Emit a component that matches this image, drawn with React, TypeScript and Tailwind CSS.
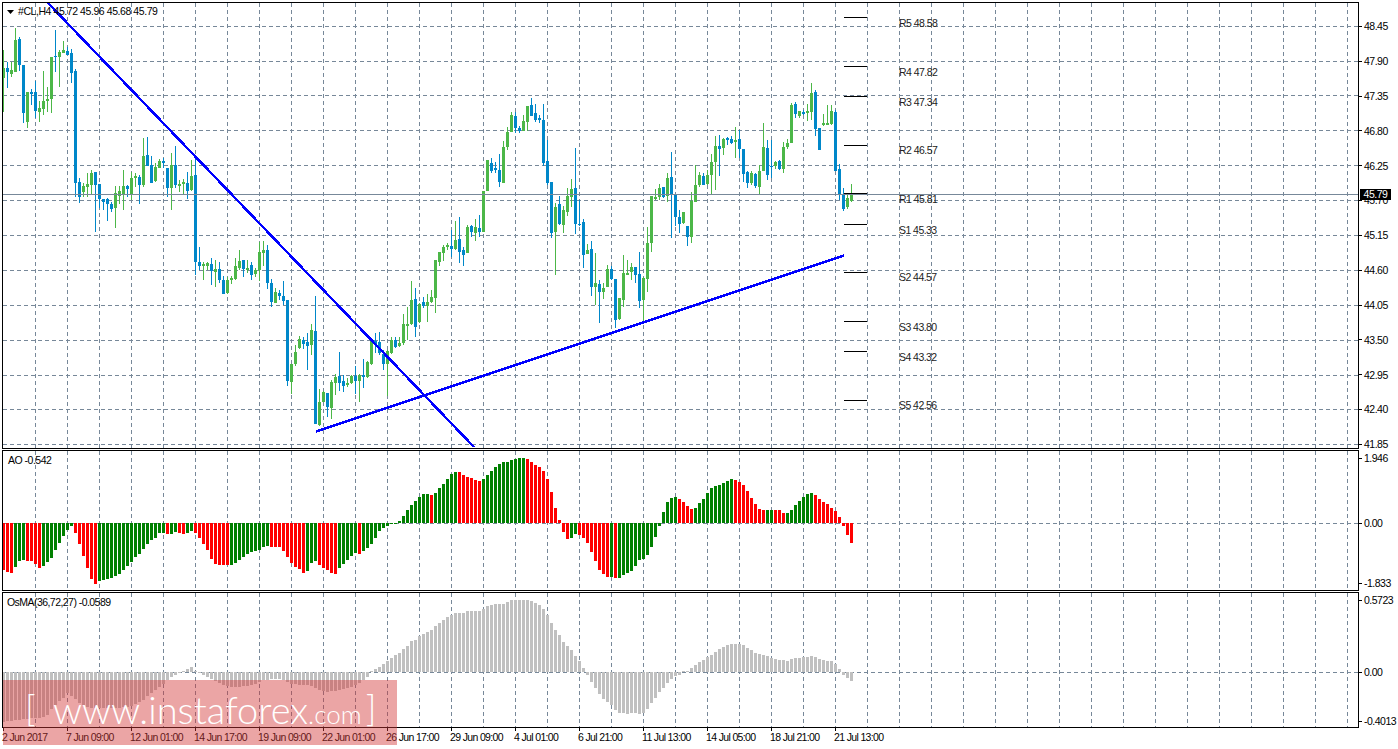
import React from 'react';

// one row per H4 bar, 4px apart starting at x=3: high, body top, body bottom, low (y px), 1 = bull
const candles: number[][] = [
  [50,68,78,112,1],[62,68,72,88,0],[62,70,74,77,1],[28,40,72,72,1],[37,39,65,71,0],[65,65,113,123,0],[92,92,122,128,1],[89,92,94,105,0],
  [81,92,111,118,0],[101,108,112,122,1],[71,101,109,115,1],[87,99,101,112,1],[57,57,99,113,1],[30,56,57,72,0],[50,52,57,87,1],[41,50,53,53,1],
  [47,51,55,55,0],[49,53,73,83,0],[69,71,183,197,0],[178,182,197,203,0],[183,186,192,197,1],[173,184,187,197,1],[170,173,185,195,1],[172,172,185,232,0],
  [184,184,199,208,0],[199,199,202,210,0],[198,199,204,221,0],[202,204,209,212,0],[186,193,208,228,1],[186,191,196,204,1],[170,186,194,210,1],[185,186,189,197,0],
  [172,178,195,200,1],[173,176,178,187,1],[175,177,185,204,0],[138,156,185,187,1],[137,155,166,166,0],[156,165,183,183,0],[163,167,181,182,1],[159,161,168,168,1],
  [158,161,163,168,0],[168,168,188,197,0],[153,165,188,210,1],[146,165,185,188,0],[180,184,186,192,1],[179,182,184,195,1],[172,183,191,199,0],[160,176,190,191,1],
  [155,175,262,275,0],[247,262,266,270,0],[262,264,266,280,1],[262,263,266,270,1],[258,264,271,285,0],[260,269,272,287,1],[262,269,280,283,0],[276,280,294,294,0],
  [277,280,293,294,1],[276,278,280,284,1],[258,266,279,280,1],[250,261,268,270,1],[260,260,269,277,0],[260,268,270,273,1],[262,265,275,280,0],[268,270,274,277,1],
  [242,252,270,281,1],[241,250,253,266,1],[245,250,283,289,0],[279,283,302,307,0],[288,292,303,303,1],[290,293,296,300,0],[281,296,301,305,0],[300,300,381,386,0],
  [364,364,382,394,1],[345,352,364,366,1],[336,339,348,349,1],[337,340,344,349,0],[333,342,346,370,0],[324,330,345,355,1],[296,331,424,424,0],[389,402,425,426,1],
  [391,392,402,402,1],[393,393,407,417,0],[380,382,408,419,1],[374,377,383,395,1],[352,376,383,391,0],[375,381,386,392,0],[378,383,385,387,1],[375,376,383,384,1],
  [366,376,381,394,0],[374,375,381,402,1],[359,375,377,388,0],[361,362,377,378,1],[340,341,364,365,1],[333,341,345,353,0],[332,342,353,355,0],[350,354,364,370,0],
  [350,351,364,396,1],[337,340,353,354,1],[337,340,347,348,0],[337,343,346,347,1],[314,324,343,345,1],[307,324,326,340,1],[281,300,324,325,1],[288,299,327,337,0],
  [303,304,322,323,1],[297,302,306,308,0],[294,302,306,322,1],[290,297,302,303,1],[260,260,298,313,1],[252,252,262,266,1],[245,247,253,261,1],[243,245,247,250,1],
  [230,246,249,257,0],[221,240,249,250,1],[217,239,252,263,0],[247,250,255,266,0],[225,227,253,253,1],[225,226,232,237,0],[219,227,233,241,1],[215,228,232,237,0],
  [191,191,232,232,1],[160,160,191,191,1],[158,163,171,173,0],[162,168,170,173,0],[154,170,182,187,0],[141,147,183,183,1],[127,132,147,150,1],[112,115,132,132,1],
  [112,116,128,133,0],[126,128,131,133,0],[115,121,131,131,1],[106,106,122,131,1],[98,105,116,116,0],[104,113,120,122,0],[115,118,120,123,0],[104,120,163,166,0],
  [140,161,183,185,0],[182,182,233,238,0],[203,207,232,275,1],[196,204,224,225,0],[206,210,225,233,1],[188,196,212,216,1],[179,189,197,207,1],[148,188,224,234,0],
  [200,224,225,226,0],[219,222,255,268,0],[244,250,254,254,1],[241,249,287,296,0],[253,283,287,305,1],[280,284,292,323,0],[283,288,292,299,1],[265,269,287,287,1],
  [266,269,279,280,0],[279,279,320,328,0],[298,298,319,320,1],[255,273,300,307,1],[260,273,275,275,1],[263,267,272,280,1],[267,267,275,283,0],[252,274,301,308,0],
  [277,278,300,322,1],[227,243,279,292,1],[196,196,243,252,1],[189,197,199,200,1],[184,188,197,200,1],[187,187,197,198,0],[173,178,196,202,1],[152,177,195,238,0],
  [194,195,217,226,0],[210,217,224,233,0],[212,212,223,224,1],[226,226,237,246,0],[192,201,237,243,1],[165,185,202,202,1],[172,175,185,187,1],[173,176,185,185,0],
  [170,175,184,185,1],[154,162,175,194,1],[136,146,162,190,1],[135,146,149,176,0],[138,139,148,155,1],[137,138,140,145,0],[136,139,143,144,0],[127,140,142,158,1],
  [130,139,149,158,0],[149,149,174,182,0],[171,172,183,188,0],[171,173,183,185,1],[173,174,186,188,0],[165,171,187,194,1],[123,147,171,171,1],[140,148,175,180,0],
  [140,166,167,178,0],[161,162,166,169,1],[160,161,169,170,0],[142,147,169,173,1],[139,143,147,149,1],[103,105,143,143,1],[102,104,114,118,0],[111,111,116,118,1],
  [110,112,114,115,0],[104,111,113,121,1],[83,93,112,120,1],[90,92,129,136,0],[128,128,150,150,0],[114,123,125,126,1],[105,123,125,125,1],[105,111,124,125,1],
  [110,112,171,171,0],[164,169,195,200,0],[188,195,209,211,0],[195,198,207,209,1],[184,194,201,202,1],
];

// AO histogram: runs of one colour, px from the zero line (plus = below)
const aoRuns: [string, number[]][] = [
  ['#ff0000',[47,49,50]],['#008000',[44,38,37]],['#ff0000',[38,38,41,45]],['#008000',[43,39,35,27,20,13,7,3]],
  ['#ff0000',[10,21,33,45,56,61]],['#008000',[58,57,56,55,53,51,47,43,39,34,31,26,21,17,15,10,10]],['#ff0000',[11]],['#008000',[11,9]],
  ['#ff0000',[10,11]],['#008000',[10,8]],['#ff0000',[10,15,21,27,36,41,42,42,42]],['#008000',[42,40,37,34,31,29,28,27,24,23]],
  ['#ff0000',[24,24,24,28,34,40,44,46,50]],['#008000',[48,40,38]],['#ff0000',[42,45,47,50,51]],['#008000',[45,41,37,33,30]],['#ff0000',[31]],
  ['#008000',[28,25,21,15,8,5,3,1,1,-2,-7,-13,-18,-22,-26,-29,-29]],['#ff0000',[-28]],['#008000',[-30,-35,-39,-44,-49,-51]],
  ['#ff0000',[-51,-48,-46,-45,-43,-42]],['#008000',[-44,-48,-52,-56,-59,-61,-61,-63,-64,-65,-65]],['#ff0000',[-64,-61,-58,-56,-52,-44,-31,-15,-3,9,16]],
  ['#008000',[15,11]],['#ff0000',[12,15,20,29,38,47,51,54]],['#008000',[54]],['#ff0000',[55]],
  ['#008000',[55,52,50,48,43,37,36,32,24,14,3,-11,-21,-25,-26]],['#ff0000',[-24,-21,-17,-14]],['#008000',[-15,-20,-24,-30,-35,-37,-38,-40,-42,-44]],
  ['#ff0000',[-43,-41,-38,-32,-25,-19,-14,-13]],['#008000',[-13,-13]],['#ff0000',[-13,-13,-10]],['#008000',[-10,-13,-18,-22,-26,-29,-30]],
  ['#ff0000',[-28,-24,-21,-19,-15,-12,-6,3,12,20]],
];
const ao = aoRuns.flatMap(([color, vals]) => vals.map((v) => ({ color, v })));

// OsMA histogram, px above the zero line
const osma = [
  -50,-49,-49,-48,-48,-47,-47,-46,-46,-46,-45,-43,-37,-33,-29,-26,-21,-24,-27,-31,-33,-35,-36,-36,-36,-36,-36,-36,-36,-36,-35,-35,
  -34,-32,-30,-28,-24,-21,-18,-15,-12,-8,-5,-3,-1,1,3,5,1,-1,-3,-5,-7,-9,-11,-13,-14,-15,-15,-15,-14,-14,-13,-12,-10,-8,-8,-7,-7,-7,
  -8,-10,-12,-12,-13,-13,-13,-14,-16,-18,-19,-20,-19,-19,-18,-17,-16,-15,-13,-11,-8,-5,1,3,5,8,11,14,17,19,23,26,31,32,36,38,40,42,46,49,
  52,55,57,59,59,59,61,61,61,61,63,66,67,68,68,68,70,72,72,72,72,72,71,69,67,63,57,49,42,37,30,26,22,16,11,4,-3,-10,-16,-22,-27,-30,-33,
  -38,-41,-41,-42,-41,-41,-42,-41,-37,-31,-26,-20,-16,-11,-7,-4,-3,1,1,4,7,10,12,15,17,20,23,25,27,28,28,28,27,24,22,19,18,17,16,14,13,
  12,12,11,13,14,14,15,15,16,15,13,12,11,11,8,3,-3,-6,-9,
];

const gridXs = Array.from({ length: 42 }, (_, i) => 35 + 32 * i);
const priceYs = [26, 61, 95, 130, 165, 200, 235, 270, 305, 340, 375, 409, 444];
const priceLabels = ['48.45','47.90','47.35','46.80','46.25','45.70','45.15','44.60','44.05','43.50','42.95','42.40','41.85'];
const pivots = [
  ['R5 48.58', 17, 27], ['R4 47.82', 66, 75.5], ['R3 47.34', 96, 105.5], ['R2 46.57', 145, 154], ['R1 45.81', 193, 202.5],
  ['S1 45.33', 224, 233.5], ['S2 44.57', 272, 281], ['S3 43.80', 321, 330.5], ['S4 43.32', 351, 360.5], ['S5 42.56', 400, 408.5],
] as const;
const times = ['2 Jun 2017','7 Jun 09:00','12 Jun 01:00','14 Jun 17:00','19 Jun 09:00','22 Jun 01:00','26 Jun 17:00','29 Jun 09:00','4 Jul 01:00','6 Jul 21:00','11 Jul 13:00','14 Jul 05:00','18 Jul 21:00','21 Jul 13:00'];

const GRID = '#778899';

function VGrid({ y1, y2 }: { y1: number; y2: number }) {
  return (
    <>
      {gridXs.map((x) => (
        <line key={x} x1={x + 0.5} x2={x + 0.5} y1={y1} y2={y2} stroke={GRID} strokeDasharray="4 3" />
      ))}
    </>
  );
}

function HGrid({ y }: { y: number }) {
  return <line x1={3} x2={1358} y1={y + 0.5} y2={y + 0.5} stroke={GRID} strokeDasharray="4 3" />;
}

function AxisLabel({ children, className = '' }: { children: React.ReactNode; className?: string }) {
  return (
    <div className={`flex items-center h-[13px] ${className}`}>
      <div className="w-[3px] h-px bg-black" />
      <span className="ml-[2px] text-[10.5px] tracking-[-0.5px] leading-none text-black whitespace-nowrap">{children}</span>
    </div>
  );
}

export default function App() {
  return (
    <div className="relative w-[1398px] h-[749px] overflow-hidden bg-white pt-[2px] pl-[2px] flex flex-col gap-px font-['Liberation_Sans',Arial,sans-serif]">
      {/* main chart */}
      <div className="relative flex h-[447px] shrink-0">
        <div className="relative w-[1357px] h-full border border-black">
          <svg className="block" width={1355} height={445} viewBox="3 3 1355 445" shapeRendering="crispEdges">
            <VGrid y1={3} y2={448} />
            {priceYs.map((y) => <HGrid key={y} y={y} />)}
            {candles.map(([h, t, b, l, up], i) => {
              const x = 3 + i * 4;
              const fill = up ? '#4cb748' : '#0087c9';
              return (
                <g key={i} fill={fill}>
                  <rect x={x} y={h} width={1} height={l - h} />
                  <rect x={x - 1} y={t} width={3} height={Math.max(b - t, 1)} />
                </g>
              );
            })}
            <line x1={3} x2={1358} y1={194.5} y2={194.5} stroke={GRID} />
            {pivots.map(([, y]) => <rect key={y} x={844} y={y} width={23} height={1} fill="#000" />)}
            <line x1={48} y1={3} x2={474} y2={447} stroke="#0000ff" strokeWidth={2.5} />
            <line x1={316} y1={431.5} x2={844} y2={255.5} stroke="#0000ff" strokeWidth={2.5} />
            {pivots.map(([label, , y]) => (
              <text key={label} x={899} y={y} fontSize={10.5} letterSpacing={-0.55} fill="#222" shapeRendering="auto">{label}</text>
            ))}
          </svg>
          <div className="absolute left-[4px] top-[2px] flex items-center h-[13px]">
            <svg width={7} height={4} viewBox="0 0 7 4" className="mr-[4px]"><path d="M0 0h7L3.5 4z" fill="#000" /></svg>
            <span className="text-[10.5px] tracking-[-0.43px] leading-none text-black whitespace-nowrap">#CL,H4 45.72 45.96 45.68 45.79</span>
          </div>
        </div>
        <div className="flex flex-col justify-between w-[39px] h-[431px] mt-[18px] shrink-0">
          {priceLabels.map((p) => <AxisLabel key={p}>{p}</AxisLabel>)}
        </div>
        <div className="absolute left-[1358px] top-[187px] w-[31px] h-[11px] bg-black text-white text-[10.5px] tracking-[-0.5px] leading-[11px] text-center">45.79</div>
      </div>

      {/* AO */}
      <div className="relative flex h-[141px] shrink-0">
        <div className="relative w-[1357px] h-full border border-black">
          <svg className="block" width={1355} height={139} viewBox="3 451 1355 139" shapeRendering="crispEdges">
            <VGrid y1={451} y2={590} />
            <HGrid y={523} />
            {ao.map(({ color, v }, i) => (
              <rect key={i} x={2 + i * 4} y={v > 0 ? 523 : 523 + v} width={3} height={Math.abs(v) || 1} fill={color} />
            ))}
          </svg>
          <div className="absolute left-[5px] top-[3px] text-[10.5px] tracking-[-0.5px] leading-[13px] text-black whitespace-nowrap">AO -0.542</div>
        </div>
        <div className="flex flex-col w-[39px] shrink-0 pt-[2px]">
          <AxisLabel>1.946</AxisLabel>
          <AxisLabel className="mt-[52px]">0.00</AxisLabel>
          <AxisLabel className="mt-[47px]">-1.833</AxisLabel>
        </div>
      </div>

      {/* OsMA */}
      <div className="relative flex h-[136px] shrink-0">
        <div className="relative w-[1357px] h-full border border-black">
          <svg className="block" width={1355} height={134} viewBox="3 593 1355 134" shapeRendering="crispEdges">
            <VGrid y1={593} y2={727} />
            <HGrid y={672} />
            {osma.map((v, i) => (
              <rect key={i} x={2 + i * 4} y={v > 0 ? 672 - v : 672} width={3} height={Math.abs(v) || 1} fill="#c0c0c0" />
            ))}
          </svg>
          <div className="absolute left-[4px] top-[3px] text-[10.5px] tracking-[-0.55px] leading-[13px] text-black whitespace-nowrap">OsMA(36,72,27) -0.0589</div>
        </div>
        <div className="flex flex-col w-[39px] shrink-0 pt-[2px]">
          <AxisLabel>0.5723</AxisLabel>
          <AxisLabel className="mt-[59px]">0.00</AxisLabel>
          <AxisLabel className="mt-[37px]">-0.4013</AxisLabel>
        </div>
      </div>

      {/* time axis */}
      <div className="flex shrink-0 -mt-px">
        {times.map((t) => (
          <div key={t} className="w-[64px] shrink-0 flex flex-col">
            <div className="w-px h-[3px] ml-px bg-black" />
            <span className="text-[10.5px] tracking-[-0.65px] leading-[13px] text-black whitespace-nowrap">{t}</span>
          </div>
        ))}
      </div>

      {/* broker watermark */}
      <div className="absolute left-[3px] top-[680px] w-[394px] h-[65px] bg-[rgba(211,55,55,0.45)] flex items-baseline pl-[22px] pt-[10px] text-white whitespace-nowrap font-['Lato',sans-serif] font-light">
        <span className="w-[28px] text-[36px] leading-[38px] relative -top-[3px]">[</span>
        <span className="text-[38px] leading-[38px]">www.instaforex</span>
        <span className="text-[26px] leading-[30px]">.com</span>
        <span className="ml-[4px] text-[36px] leading-[38px] relative -top-[3px]">]</span>
      </div>
    </div>
  );
}
